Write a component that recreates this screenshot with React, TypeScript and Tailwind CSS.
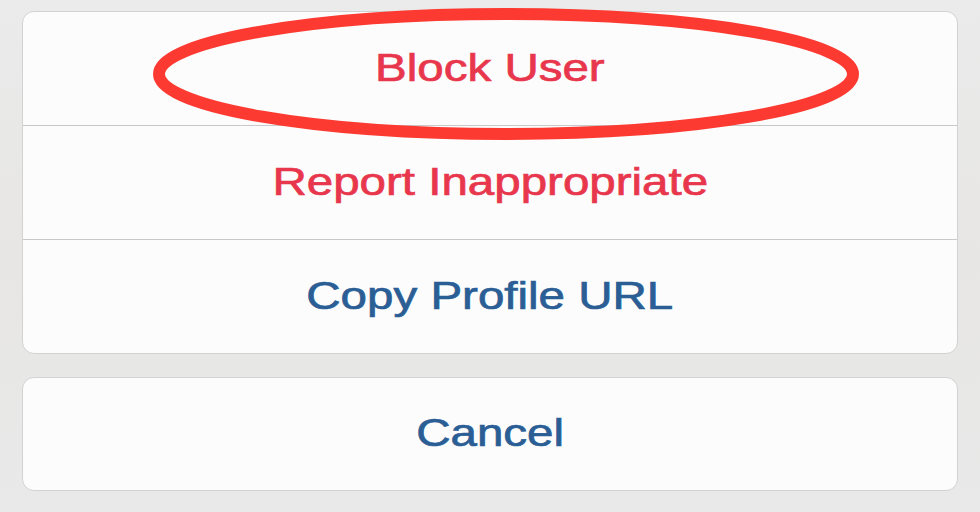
import React from "react";

const font = { fontFamily: '"Liberation Sans", Arial, sans-serif' };

function Row({ label, color, border }: { label: string; color: string; border?: boolean }) {
  return (
    <div
      className={`flex-1 flex items-center justify-center ${border ? "border-b border-[#c9c9c9]" : ""}`}
    >
      <span
        className={`text-[38px] leading-none ${color} scale-x-[1.25] -translate-y-[1px] inline-block [-webkit-text-stroke:0.7px_currentColor]`}
        style={font}
      >
        {label}
      </span>
    </div>
  );
}

export default function App() {
  return (
    <div className="relative w-[980px] h-[512px] overflow-hidden bg-gradient-to-b from-[#ebebeb] via-[#e7e6e5] to-[#e9e9e9]">
      <div className="flex flex-col gap-[23px] pt-[11px] pl-[22px] pr-[22px]">
        <div className="h-[343px] flex flex-col rounded-[12px] border border-[#d2d2d2] bg-[#fcfcfc] overflow-hidden">
          <Row label="Block User" color="text-[#e8374d]" border />
          <Row label="Report Inappropriate" color="text-[#e8374d]" border />
          <Row label="Copy Profile URL" color="text-[#2a5e95]" />
        </div>
        <div className="h-[114px] flex flex-col rounded-[12px] border border-[#d2d2d2] bg-[#fcfcfc] overflow-hidden">
          <Row label="Cancel" color="text-[#2a5e95]" />
        </div>
      </div>
      <svg
        className="absolute left-0 top-0 pointer-events-none"
        width="980"
        height="512"
        viewBox="0 0 980 512"
      >
        <ellipse cx="506" cy="74" rx="347" ry="60" fill="none" stroke="#fd3a31" strokeWidth="12" />
      </svg>
    </div>
  );
}
